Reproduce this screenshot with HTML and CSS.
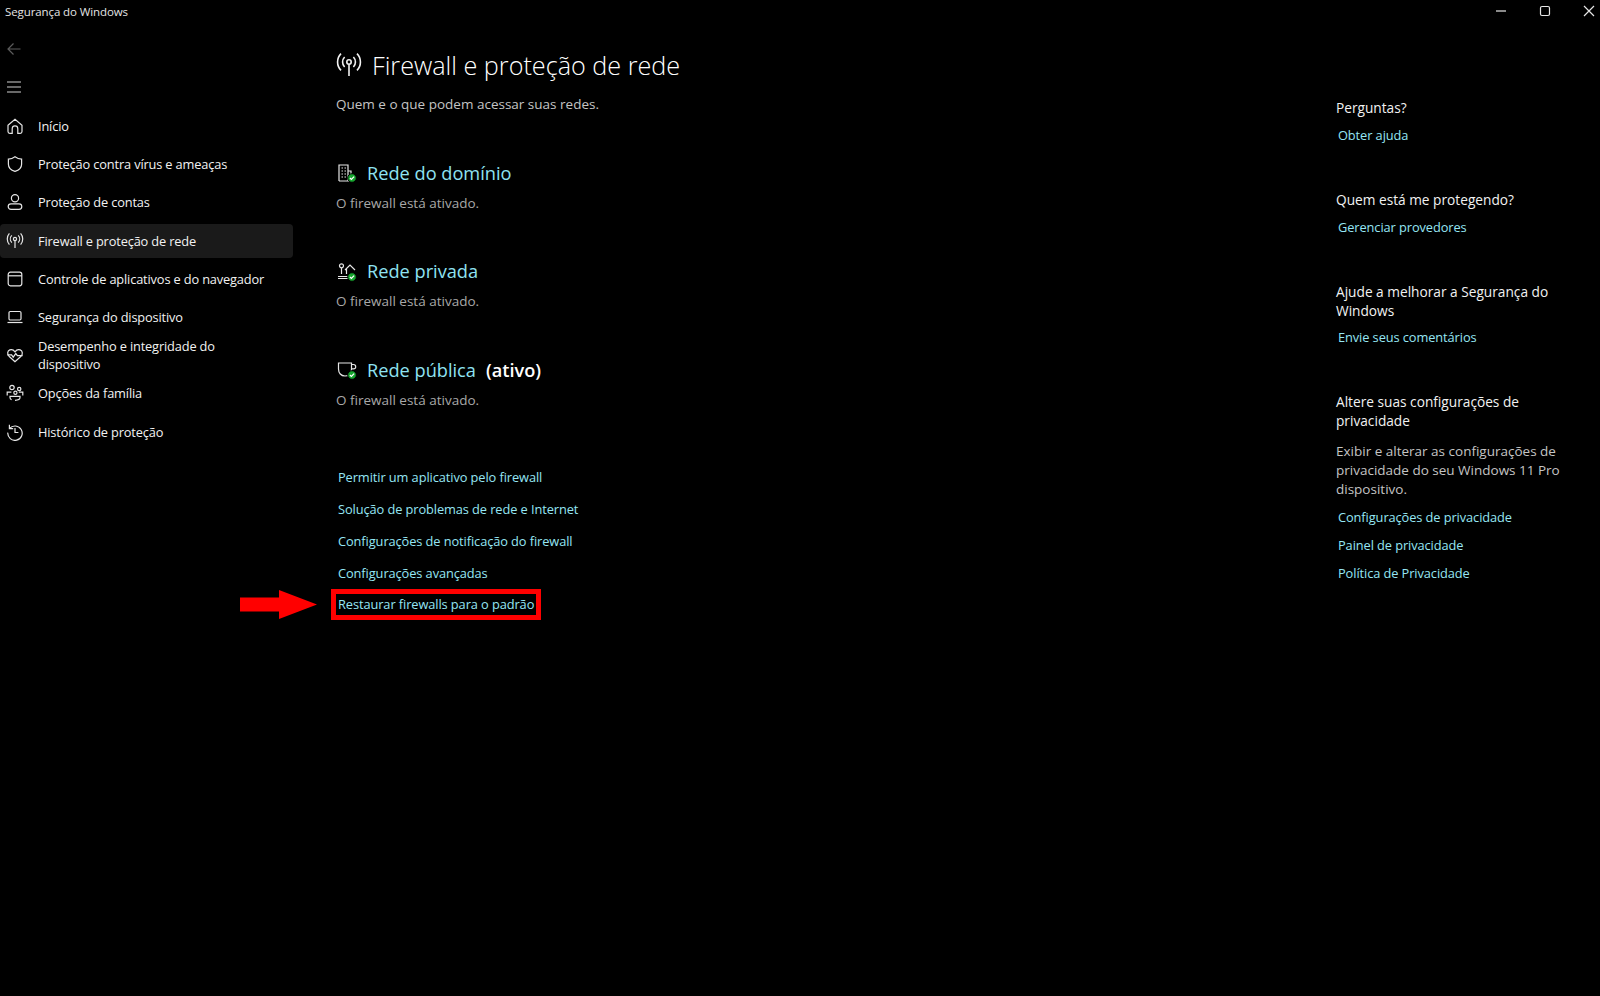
FILE: index.html
```html
<!DOCTYPE html>
<html>
<head>
    <title>Segurança do Windows</title>
    <link rel="stylesheet" href="styles.css">
</head>
<body>
    <div class="titlebar">
        <span class="app-name">Segurança do Windows</span>
        <div class="win-controls">
            <svg width="12" height="12" viewBox="0 0 12 12"><path d="M1 6h10" class="ln"/></svg>
            <svg width="12" height="12" viewBox="0 0 12 12"><rect x="1.5" y="1.5" width="9" height="9" rx="1.5" class="ln"/></svg>
            <svg width="12" height="12" viewBox="0 0 12 12"><path d="M1 1l10 10M11 1L1 11" class="ln"/></svg>
        </div>
    </div>

    <div class="app">
        <nav class="sidebar">
            <div class="tool-btn">
                <svg width="16" height="16" viewBox="0 0 16 16"><path d="M14.5 8H2M7.5 2.500L2 8l5.500 5.500" class="ln dim"/></svg>
            </div>
            <div class="tool-btn">
                <svg width="16" height="16" viewBox="0 0 16 16"><path d="M1 3h14M1 8h14M1 13h14" class="ln soft"/></svg>
            </div>
            <div class="nav-list">
                <div class="nav-item">
                    <svg class="nav-icon" width="18" height="18" viewBox="0 0 18 18"><path d="M2 8.200L9 2.200l7 6v6.300a1.800 1.800 0 0 1-1.800 1.800h-2.400v-4.600a2.800 2.800 0 0 0-5.600 0v4.600H3.800a1.800 1.800 0 0 1-1.800-1.800z" class="ln"/></svg>
                    <span>Início</span>
                </div>
                <div class="nav-item">
                    <svg class="nav-icon" width="18" height="18" viewBox="0 0 18 18"><path d="M9 1.800c2 1.500 4.200 2.300 6.600 2.400v5c0 3.600-2.400 5.900-6.600 7.200-4.200-1.300-6.600-3.600-6.600-7.200v-5C4.800 4.100 7 3.300 9 1.800z" class="ln"/></svg>
                    <span>Proteção contra vírus e ameaças</span>
                </div>
                <div class="nav-item">
                    <svg class="nav-icon" width="18" height="18" viewBox="0 0 18 18"><circle cx="9" cy="5.200" r="3.600" class="ln"/><rect x="2.200" y="10.800" width="13.600" height="5.600" rx="2.800" class="ln"/></svg>
                    <span>Proteção de contas</span>
                </div>
                <div class="nav-item active">
                    <svg class="nav-icon" width="18" height="18" viewBox="0 0 18 18"><circle cx="9" cy="7" r="1.600" class="ln"/><path d="M9 8.600v7.400M5.800 3.400a5.200 5.200 0 0 0 0 7.200M12.200 3.400a5.200 5.200 0 0 1 0 7.200M3.400 1.400a8.400 8.400 0 0 0 0 11.200M14.600 1.400a8.400 8.400 0 0 1 0 11.200" class="ln"/></svg>
                    <span>Firewall e proteção de rede</span>
                </div>
                <div class="nav-item">
                    <svg class="nav-icon" width="18" height="18" viewBox="0 0 18 18"><rect x="2.200" y="2.200" width="13.600" height="13.600" rx="2.200" class="ln"/><path d="M2.200 5.800h13.600" class="ln"/></svg>
                    <span>Controle de aplicativos e do navegador</span>
                </div>
                <div class="nav-item">
                    <svg class="nav-icon" width="18" height="18" viewBox="0 0 18 18"><rect x="3" y="3.500" width="12" height="8.500" rx="1.200" class="ln"/><path d="M1.500 14.500h15" class="ln"/></svg>
                    <span>Segurança do dispositivo</span>
                </div>
                <div class="nav-item">
                    <svg class="nav-icon" width="18" height="18" viewBox="0 0 18 18"><path d="M9 15.800L3 10.200C.9 8 1.400 4.800 3.800 3.900 5.700 3.200 7.700 4 9 5.800c1.300-1.800 3.300-2.600 5.200-1.900 2.400.9 2.900 4.100.8 6.300z" class="ln"/><path d="M1.400 8.800h4.200l1.600 2.400 2.600-3.600 1.600 2h5.200" class="ln"/></svg>
                    <span>Desempenho e integridade do<br>dispositivo</span>
                </div>
                <div class="nav-item">
                    <svg class="nav-icon" width="18" height="18" viewBox="0 0 18 18"><circle cx="6" cy="3.500" r="2.200" class="ln"/><circle cx="13.200" cy="5" r="1.700" class="ln"/><circle cx="9.400" cy="8.800" r="1.600" class="ln"/><path d="M5.600 15.800c-1-.4-1.600-1.200-1.600-2.200v-1.300h10v1.300c0 1.500-1.900 2.700-5 2.700M1.200 11.500V8.200h4.200M12.800 8.200h4v3.300" class="ln"/></svg>
                    <span>Opções da família</span>
                </div>
                <div class="nav-item">
                    <svg class="nav-icon" width="18" height="18" viewBox="0 0 18 18"><path d="M3.400 1.800v3.800h3.800M3.600 5.400A7.200 7.200 0 1 1 1.800 9.600" class="ln"/><path d="M9 5v4.500h3.400" class="ln"/></svg>
                    <span>Histórico de proteção</span>
                </div>
            </div>
        </nav>

        <main class="content">
            <div class="page-head">
                <svg width="26" height="26" viewBox="0 0 26 26"><circle cx="13" cy="10" r="2.200" class="ln bold"/><path d="M13 12.200V24M8.600 5a7.200 7.200 0 0 0 0 10M17.400 5a7.200 7.200 0 0 1 0 10M5 1.600a12 12 0 0 0 0 16.800M21 1.600a12 12 0 0 1 0 16.800" class="ln bold"/></svg>
                <h1>Firewall e proteção de rede</h1>
            </div>
            <p class="subtitle">Quem e o que podem acessar suas redes.</p>

            <section class="network first">
                <div class="network-head">
                    <svg class="net-icon" width="20" height="20" viewBox="0 0 20 20"><path d="M2 18V2h9v16M2 18h11M11 8h3v4" class="ln"/><path d="M4.500 5h1.500M7.500 5H9M4.500 8h1.500M7.500 8H9M4.500 11h1.500M7.500 11H9M4.500 14h1.500M7.500 14H9" class="ln"/><circle cx="15" cy="15" r="4.300" class="ok"/><path d="M12.900 15l1.500 1.500 2.700-2.900" class="tick"/></svg>
                    <h2>Rede do domínio</h2>
                </div>
                <p class="status">O firewall está ativado.</p>
            </section>

            <section class="network">
                <div class="network-head">
                    <svg class="net-icon" width="20" height="20" viewBox="0 0 20 20"><circle cx="4.500" cy="3.800" r="2" class="ln"/><path d="M4.500 5.800V12M1 14.500h11" class="ln"/><path d="M8 8l5-5 5 5M9.500 7v5M1 16.500h10" class="ln"/><circle cx="15" cy="15" r="4.300" class="ok"/><path d="M12.900 15l1.500 1.500 2.700-2.900" class="tick"/></svg>
                    <h2>Rede privada</h2>
                </div>
                <p class="status">O firewall está ativado.</p>
            </section>

            <section class="network">
                <div class="network-head">
                    <svg class="net-icon" width="20" height="20" viewBox="0 0 20 20"><path d="M1.500 3h13v6c0 4-2.500 7-6.500 7s-6.500-3-6.500-7z" class="ln"/><path d="M14.500 4.500h2a2.200 2.200 0 0 1 0 4.400h-2" class="ln"/><circle cx="15" cy="15" r="4.300" class="ok"/><path d="M12.900 15l1.500 1.500 2.700-2.900" class="tick"/></svg>
                    <h2>Rede pública</h2>
                    <span class="active-tag">(ativo)</span>
                </div>
                <p class="status">O firewall está ativado.</p>
            </section>

            <div class="link-list">
                <a>Permitir um aplicativo pelo firewall</a>
                <a>Solução de problemas de rede e Internet</a>
                <a>Configurações de notificação do firewall</a>
                <a>Configurações avançadas</a>
                <a class="marked">Restaurar firewalls para o padrão
                    <svg class="arrow" width="78" height="30" viewBox="0 0 78 30"><path d="M0 7.500h39V0l38 14.500L39 29v-7.500H0z"/></svg>
                </a>
            </div>
        </main>

        <aside class="side-panel">
            <div class="panel-block">
                <h3>Perguntas?</h3>
                <a>Obter ajuda</a>
            </div>
            <div class="panel-block">
                <h3>Quem está me protegendo?</h3>
                <a>Gerenciar provedores</a>
            </div>
            <div class="panel-block">
                <h3>Ajude a melhorar a Segurança do Windows</h3>
                <a>Envie seus comentários</a>
            </div>
            <div class="panel-block">
                <h3>Altere suas configurações de privacidade</h3>
                <p>Exibir e alterar as configurações de privacidade do seu Windows 11 Pro dispositivo.</p>
                <a>Configurações de privacidade</a>
                <a>Painel de privacidade</a>
                <a>Política de Privacidade</a>
            </div>
        </aside>
    </div>
</body>
</html>
```

FILE: styles.css
```css
* {
    box-sizing: border-box;
}
body {
    margin: 0;
    height: 996px;
    overflow: hidden;
    background: #000;
    color: #fff;
    font-family: "Open Sans", "Noto Sans", sans-serif;
    font-size: 13.5px;
    line-height: 19px;
}
svg {
    display: block;
    flex: none;
}
.ln {
    fill: none;
    stroke: #e6e6e6;
    stroke-width: 1.2;
}
.ln.bold {
    stroke: #f2f2f2;
    stroke-width: 1.6;
}
.ln.dim {
    stroke: #5c5c5c;
}
.ln.soft {
    stroke: #d0d0d0;
    stroke-width: 1;
}
.ok {
    fill: #16a52e;
    stroke: #000;
    stroke-width: 1;
}
.tick {
    fill: none;
    stroke: #fff;
    stroke-width: 1.2;
}

.titlebar {
    height: 22px;
    display: flex;
    justify-content: space-between;
    align-items: center;
    padding-left: 5px;
    font-size: 11.5px;
    letter-spacing: -0.1px;
    color: #e4e4e4;
}
.win-controls {
    display: flex;
    gap: 32px;
    padding-right: 5px;
}

.app {
    display: flex;
    padding-top: 8px;
}
.sidebar {
    width: 336px;
    flex: none;
}
.tool-btn {
    height: 38px;
    display: flex;
    align-items: center;
    padding-left: 6px;
}
.nav-list {
    display: flex;
    flex-direction: column;
    padding-top: 1px;
}
.nav-item {
    width: 293px;
    height: 34px;
    margin: 2.1px 0;
    padding-left: 6px;
    display: flex;
    align-items: center;
    gap: 14px;
    border-radius: 4px;
    color: #f2f2f2;
    font-size: 12.8px;
    letter-spacing: -0.15px;
}
.nav-item.active {
    background: #1a1a1a;
}
.nav-item span {
    line-height: 18px;
}

.content {
    width: 1000px;
    flex: none;
}
.page-head {
    display: flex;
    align-items: center;
    gap: 10px;
    height: 32px;
    margin-top: 19px;
}
h1 {
    margin: 0;
    font-size: 25.2px;
    font-weight: 300;
    line-height: 32px;
}
.subtitle {
    margin: 14px 0 0;
    color: #c4c4c4;
}
.network.first {
    margin-top: 46px;
}
.network {
    margin-top: 46.2px;
}
.network-head {
    display: flex;
    align-items: center;
    gap: 10px;
    height: 26px;
}
.net-icon {
    margin-left: 1px;
}
h2 {
    margin: 0;
    font-size: 18.2px;
    font-weight: 400;
    color: #8fe3f2;
}
.active-tag {
    font-size: 18.2px;
    font-weight: 600;
}
.status {
    margin: 7.5px 0 0;
    color: #a8a8a8;
}
.link-list {
    margin-top: 58px;
    padding-left: 2px;
    display: flex;
    flex-direction: column;
    align-items: flex-start;
    gap: 12.9px;
}
.link-list a {
    color: #95e6f4;
    font-size: 12.8px;
    letter-spacing: -0.08px;
}
.marked {
    position: relative;
}
.marked::after {
    content: "";
    position: absolute;
    left: -7px;
    right: -7px;
    top: -6px;
    bottom: -6px;
    border: 5px solid #f00;
}
.arrow {
    position: absolute;
    left: -98px;
    top: -5px;
    fill: #f00;
}

.side-panel {
    width: 230px;
    flex: none;
    padding-top: 68px;
}
.panel-block {
    margin-bottom: 45px;
}
.panel-block h3 {
    margin: 0;
    font-size: 13.7px;
    font-weight: 400;
    color: #f2f2f2;
}
.panel-block p {
    margin: 12px 0 0;
    color: #c4c4c4;
}
.panel-block a {
    display: block;
    margin: 8.8px 0 0 2px;
    color: #95e6f4;
    font-size: 12.8px;
    letter-spacing: -0.08px;
}
```
